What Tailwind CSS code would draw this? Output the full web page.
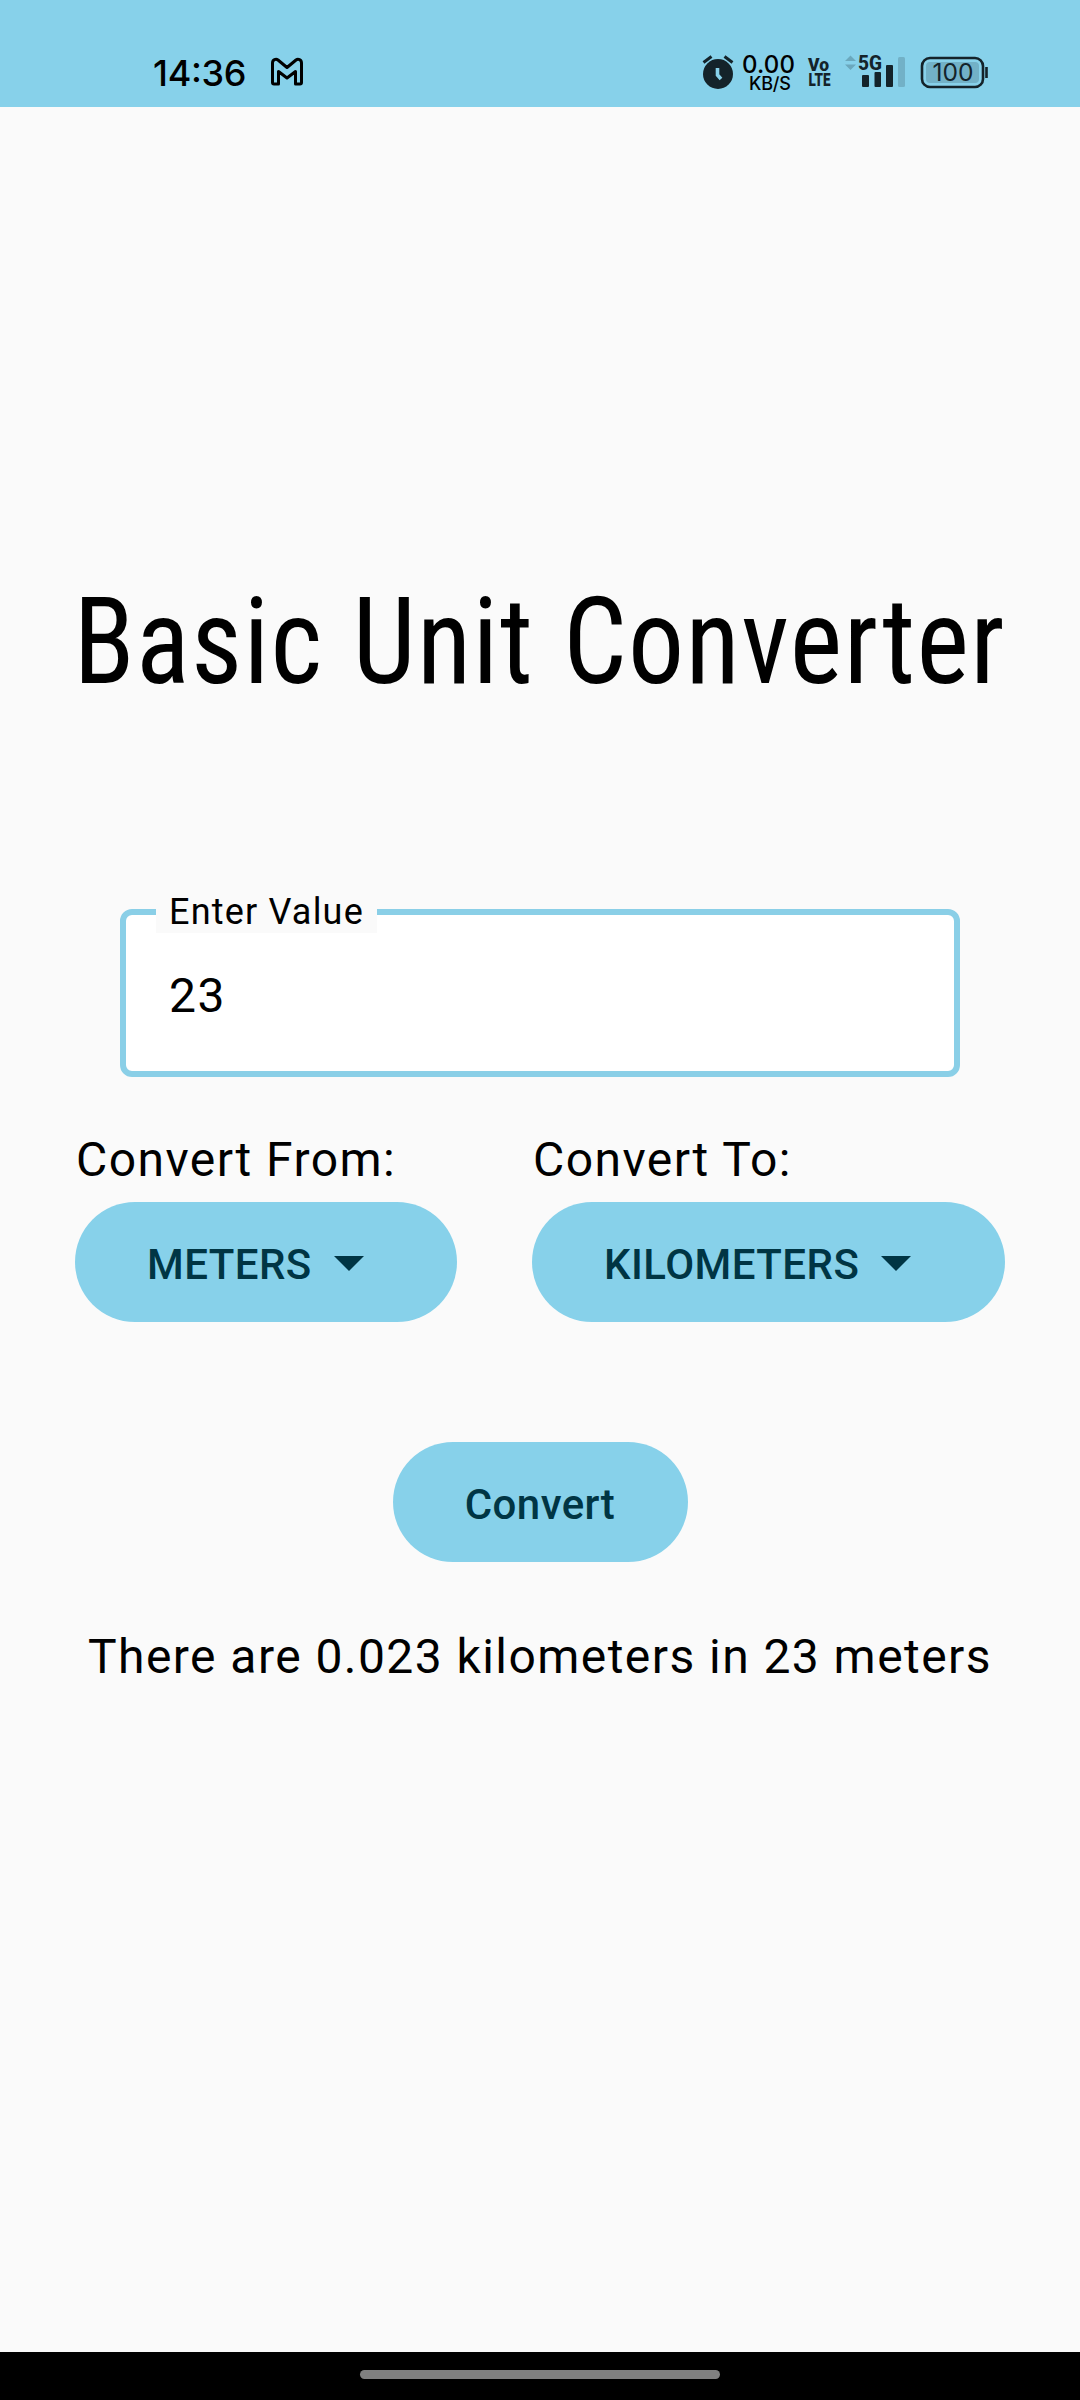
<!DOCTYPE html>
<html lang="en">
<head>
<meta charset="utf-8">
<title>Basic Unit Converter</title>
<script src="https://cdn.jsdelivr.net/npm/@tailwindcss/browser@4"></script>
</head>
<body class="bg-[#fafafa]">
<div class="flex h-[2400px] w-[1080px] flex-col overflow-hidden bg-[#fafafa] font-['Roboto',sans-serif] text-black">
  <header class="h-[107px] shrink-0 bg-[#87d1ea]">
    <svg class="block" width="1080" height="107" viewBox="0 0 1080 107">
      <text x="153" y="86" font-size="36" textLength="93.500" class="font-['Inter',sans-serif] font-medium">14:36</text>
      <path d="M272.500 82.500V63c0-3.500 3.500-4.500 5.500-3l9 7.500 9-7.500c2-1.500 5.500-.5 5.500 3v19.500c0 .8-.7 1.500-1.500 1.500h-4.500V71.500L287 78l-8.500-6.500V84H274c-.8 0-1.500-.7-1.500-1.500z" fill="none" stroke="#000" stroke-width="3" stroke-linejoin="round"/>
      <!-- alarm -->
      <circle cx="718" cy="74" r="15" fill="#14232a"/>
      <path d="M703.500 62.500l8-6M732.500 62.500l-8-6" stroke="#14232a" stroke-width="3"/>
      <path d="M717.500 68v7l3.500 4" fill="none" stroke="#87d1ea" stroke-width="3.600"/>
      <!-- network speed -->
      <text x="742" y="73" font-size="24" textLength="53" class="font-['Inter',sans-serif] font-medium">0.00</text>
      <text x="749" y="90" font-size="18" textLength="42" class="font-['Inter',sans-serif] font-medium">KB/S</text>
      <text x="808" y="71" font-size="19" textLength="21" lengthAdjust="spacingAndGlyphs" fill="#14232a" class="font-['Roboto',sans-serif] font-black">Vo</text>
      <text x="808.500" y="86" font-size="18.500" textLength="22" lengthAdjust="spacingAndGlyphs" fill="#14232a" class="font-['Roboto',sans-serif] font-black">LTE</text>
      <!-- signal -->
      <path d="M845 61l5.500-5.500 5.500 5.500zM845 64.500l5.500 5.500 5.500-5.500z" fill="#6ba8bd"/>
      <text x="858" y="70" font-size="20.500" textLength="24" lengthAdjust="spacingAndGlyphs" fill="#14232a" class="font-['Roboto',sans-serif] font-extrabold">5G</text>
      <g fill="#14232a">
        <rect x="862" y="75" width="7" height="12" rx="1"/>
        <rect x="874.500" y="72" width="6.500" height="15" rx="1"/>
        <rect x="886" y="65" width="7" height="22" rx="1"/>
      </g>
      <rect x="898" y="57" width="7" height="30" rx="1.500" fill="#72b1c7"/>
      <!-- battery -->
      <rect x="922" y="58" width="61" height="29" rx="8" fill="none" stroke="#14232a" stroke-width="2.600"/>
      <rect x="926" y="62" width="53" height="21" rx="4" fill="#72b1c7"/>
      <path d="M986.500 67v11" stroke="#14232a" stroke-width="2.600"/>
      <text x="932.500" y="81" font-size="24" textLength="41" lengthAdjust="spacingAndGlyphs" fill="#14232a" class="font-['Inter',sans-serif]">100</text>
    </svg>
  </header>

  <main class="flex flex-1 flex-col items-center pt-[465px]">
    <h1 class="h-[140px] scale-x-[0.933] text-[120px] leading-[140px] whitespace-nowrap [font-stretch:75%] [word-spacing:2px] tracking-[1.5px]">Basic Unit Converter</h1>

    <div class="relative mt-[197px] h-[168px] w-[840px] rounded-[12px] border-[6px] border-[#8acfe7] bg-white pt-[53px] pl-[43px]">
      <div class="absolute -top-6 left-[30px] h-[42px] w-[221px] bg-[#fafafa] pl-[13px] text-[36px] leading-[42px] tracking-[1.2px] whitespace-nowrap">Enter Value</div>
      <div class="text-[48px] leading-[56px] tracking-[1.44px]">23</div>
    </div>

    <div class="mt-[55px] flex gap-[75px]">
      <div>
        <div class="pl-px text-[48px] leading-[56px] tracking-[1.44px]">Convert From:</div>
        <button class="mt-[14px] flex h-[120px] w-[382px] items-center rounded-full bg-[#87d1ea] pt-[5px] pl-[72px] text-[42px] font-medium tracking-[0.45px] text-[#003544]">METERS<svg class="-mt-[2px] ml-[22px]" width="30" height="15" viewBox="0 0 30 15"><path d="M0 0h30L15 15z" fill="currentColor"/></svg></button>
      </div>
      <div>
        <div class="pl-px text-[48px] leading-[56px] tracking-[1.44px]">Convert To:</div>
        <button class="mt-[14px] flex h-[120px] w-[473px] items-center rounded-full bg-[#87d1ea] pt-[5px] pl-[72px] text-[42px] font-medium tracking-[0.45px] text-[#003544]">KILOMETERS<svg class="-mt-[2px] ml-[22px]" width="30" height="15" viewBox="0 0 30 15"><path d="M0 0h30L15 15z" fill="currentColor"/></svg></button>
      </div>
    </div>

    <button class="mt-[120px] flex h-[120px] w-[295px] items-center justify-center rounded-full bg-[#87d1ea] pt-[5px] text-[42px] font-medium tracking-[0.42px] text-[#003544]">Convert</button>
    <p class="mt-[67px] text-[48px] leading-[56px] tracking-[1.44px] whitespace-nowrap">There are 0.023 kilometers in 23 meters</p>
  </main>

  <footer class="flex h-12 shrink-0 justify-center bg-black pt-[18px]">
    <div class="h-[9px] w-[360px] rounded-full bg-[#808080]"></div>
  </footer>
</div>
</body>
</html>
